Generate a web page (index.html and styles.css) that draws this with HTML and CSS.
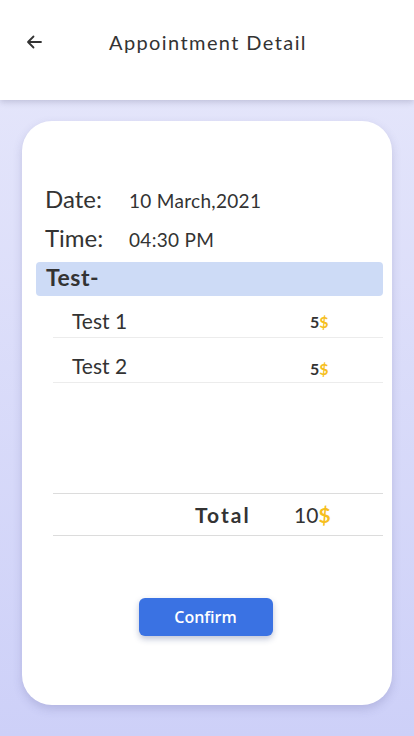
FILE: index.html
```html
<!DOCTYPE html>
<html>
<head>
<meta charset="utf-8">
<link rel="stylesheet" href="styles.css">
</head>
<body>
<div class="screen">
  <header class="topbar">
    <svg class="back" width="16" height="14" viewBox="0 0 16 14"><path d="M15 7H2.5M7.5 1.5L2 7l5.5 5.5" fill="none" stroke="#333" stroke-width="1.8" stroke-linecap="round" stroke-linejoin="round"/></svg>
    <h1 class="title">Appointment Detail</h1>
  </header>
  <main class="content">
    <section class="card">
      <div class="info">
        <div class="info-row"><span class="label">Date:</span><span class="value">10 March,2021</span></div>
        <div class="info-row"><span class="label">Time:</span><span class="value">04:30 PM</span></div>
      </div>
      <div class="section-bar">Test-</div>
      <ul class="tests">
        <li class="test-row"><span class="test-name">Test 1</span><span class="price">5<span class="dollar">$</span></span></li>
        <li class="test-row"><span class="test-name">Test 2</span><span class="price price-low">5<span class="dollar">$</span></span></li>
      </ul>
      <div class="total">
        <span class="total-label">Total</span>
        <span class="total-value">10<span class="dollar">$</span></span>
      </div>
      <div class="actions">
        <button class="confirm">Confirm</button>
      </div>
    </section>
  </main>
</div>
</body>
</html>
```
FILE: styles.css
```css
* { box-sizing: border-box; }
html, body { margin: 0; padding: 0; }
body {
  width: 414px;
  height: 736px;
  overflow: hidden;
  font-family: "Lato", "Open Sans", sans-serif;
  color: #333;
}
.screen {
  width: 414px;
  height: 736px;
  background: linear-gradient(180deg, #e7e8fb 0%, #cdd0f8 100%);
  display: flex;
  flex-direction: column;
}
.topbar {
  height: 100px;
  background: #fff;
  box-shadow: 0 2px 6px rgba(60, 60, 100, 0.22);
  display: flex;
  align-items: flex-start;
  padding: 31px 0 0 26px;
  position: relative;
  z-index: 1;
}
.back { margin-top: 4px; }
.title {
  margin: 0 0 0 67px;
  font-size: 20px;
  font-weight: 400;
  letter-spacing: 1.4px;
  color: #333;
  line-height: 22px;
}
.content {
  padding: 21px 22px 0 22px;
}
.card {
  background: #fff;
  border-radius: 30px;
  height: 584px;
  box-shadow: 0 4px 10px rgba(80, 80, 140, 0.22);
  padding: 62px 9px 0 14px;
}
.info { padding-left: 9px; }
.info-row {
  display: flex;
  align-items: baseline;
  height: 39px;
  padding-top: 1px;
}
.label {
  width: 84px;
  font-size: 24px;
  color: #333;
}
.value {
  font-size: 19px;
  color: #333;
  letter-spacing: 0.3px;
}
.section-bar {
  margin-top: 1px;
  height: 34px;
  background: #cddbf6;
  border-radius: 4px;
  font-size: 23px;
  font-weight: 700;
  letter-spacing: 0.5px;
  color: #333;
  padding: 1px 0 0 10px;
}
.tests {
  list-style: none;
  margin: -3px 0 0 17px;
  padding: 0;
}
.test-row {
  display: flex;
  align-items: center;
  height: 45px;
  border-bottom: 1px solid #ececec;
  padding: 10px 0 0 19px;
}
.test-name {
  font-size: 21px;
  flex: 1;
  color: #333;
}
.price {
  width: 73px;
  font-size: 16px;
  font-weight: 700;
  padding-top: 2px;
}
.price-low { padding-top: 6px; }
.dollar { color: #f6bf1f; font-weight: 700; }
.total {
  margin: 110px 0 0 17px;
  height: 43px;
  border-top: 1px solid #dcdcdc;
  border-bottom: 1px solid #dcdcdc;
  display: flex;
  align-items: center;
  padding-left: 142px;
}
.total-label {
  font-size: 21px;
  font-weight: 700;
  letter-spacing: 2px;
  width: 99px;
}
.total-value {
  font-size: 21px;
}
.actions {
  display: flex;
  justify-content: center;
  margin-top: 62px;
  padding-right: 8px;
}
.confirm {
  width: 134px;
  height: 38px;
  border: none;
  border-radius: 6px;
  background: #3a72e3;
  color: #fff;
  font-family: "Open Sans", sans-serif;
  font-size: 16px;
  font-weight: 600;
  box-shadow: 0 3px 6px rgba(40, 60, 120, 0.3);
}
```
